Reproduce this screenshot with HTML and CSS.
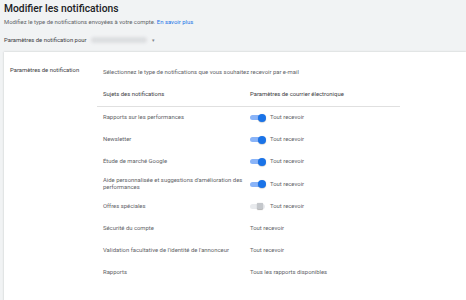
FILE: index.html
```html
<!DOCTYPE html>
<html lang="fr">
<head>
  <meta charset="UTF-8" />
  <title>Modifier les notifications</title>
  <link rel="stylesheet" href="styles.css">
</head>
<body>
  <div class="page-header">
    <h1>Modifier les notifications</h1>
    <p class="subtitle">Modifiez le type de notifications envoyées à votre compte. <a href="#">En savoir plus</a></p>
    <div class="account-select">
      Paramètres de notification pour
      <span class="account-blur"></span>
      <span class="caret">▾</span>
    </div>
  </div>

  <div class="card">
    <div class="section-label">Paramètres de notification</div>
    <div class="section-body">
      <p class="intro">Sélectionnez le type de notifications que vous souhaitez recevoir par e-mail</p>
      <div class="table">
        <div class="row head">
          <div>Sujets des notifications</div>
          <div>Paramètres de courrier électronique</div>
        </div>
        <div class="row">
          <div>Rapports sur les performances</div>
          <div class="setting"><span class="toggle on"></span>Tout recevoir</div>
        </div>
        <div class="row">
          <div>Newsletter</div>
          <div class="setting"><span class="toggle on"></span>Tout recevoir</div>
        </div>
        <div class="row">
          <div>Étude de marché Google</div>
          <div class="setting"><span class="toggle on"></span>Tout recevoir</div>
        </div>
        <div class="row">
          <div>Aide personnalisée et suggestions d'amélioration des performances</div>
          <div class="setting"><span class="toggle on"></span>Tout recevoir</div>
        </div>
        <div class="row">
          <div>Offres spéciales</div>
          <div class="setting"><span class="toggle"></span>Tout recevoir</div>
        </div>
        <div class="row">
          <div>Sécurité du compte</div>
          <div>Tout recevoir</div>
        </div>
        <div class="row">
          <div>Validation facultative de l'identité de l'annonceur</div>
          <div>Tout recevoir</div>
        </div>
        <div class="row">
          <div>Rapports</div>
          <div>Tous les rapports disponibles</div>
        </div>
      </div>
    </div>
  </div>
</body>
</html>
```

FILE: styles.css
```css
body {
  margin: 0;
  font-family: Roboto, "Liberation Sans", sans-serif;
  background: #f1f3f4;
  color: #3c4043;
  height: 300px;
  overflow: hidden;
}
.page-header {
  padding: 2px 4px 0 4px;
  height: 50px;
}
h1 {
  margin: 0;
  font-size: 10.3px;
  font-weight: 500;
  color: #202124;
  line-height: 13px;
}
.subtitle {
  margin: 3px 0 0 0;
  font-size: 5.9px;
  color: #5f6368;
  line-height: 8px;
}
.subtitle a {
  color: #1a73e8;
  text-decoration: none;
}
.account-select {
  margin-top: 10px;
  font-size: 5.9px;
  color: #3c4043;
  display: flex;
  align-items: center;
  height: 8px;
}
.account-blur {
  display: inline-block;
  width: 56px;
  height: 6px;
  margin-left: 4px;
  background: #dcdee0;
  border-radius: 3px;
  filter: blur(1.5px);
}
.caret {
  margin-left: 5px;
  color: #80868b;
  font-size: 5px;
}
.card {
  margin-left: 4px;
  background: #fff;
  box-shadow: 0 0 2px rgba(60, 64, 67, 0.25);
  display: flex;
  height: 260px;
}
.section-label {
  width: 93px;
  padding: 15px 0 0 6px;
  box-sizing: border-box;
  font-size: 5.9px;
  color: #3c4043;
}
.section-body {
  padding-top: 16px;
  width: 303px;
}
.intro {
  margin: 0 0 0 6px;
  font-size: 5.9px;
  color: #5f6368;
  line-height: 8px;
}
.table {
  margin-top: 7.5px;
  font-size: 5.9px;
  color: #5f6368;
}
.row {
  display: grid;
  grid-template-columns: 147px 1fr;
  align-items: center;
  height: 22.2px;
  padding-left: 6px;
  line-height: 7px;
}
.row > div:first-child {
  padding-right: 7px;
}
.row.head {
  height: 22px;
  border-bottom: 1px solid #e0e0e0;
  color: #3c4043;
}
.setting {
  display: flex;
  align-items: center;
}
.toggle {
  position: relative;
  display: inline-block;
  width: 15px;
  height: 5px;
  border-radius: 3px;
  background: #8ab4f8;
  margin-right: 5px;
}
.toggle::after {
  content: "";
  position: absolute;
  right: -1px;
  top: -1.5px;
  width: 8px;
  height: 8px;
  border-radius: 50%;
  background: #1a73e8;
  box-shadow: 0 0.5px 1px rgba(0, 0, 0, 0.3);
}
.toggle:not(.on) {
  background: #e8eaed;
}
.toggle:not(.on)::after {
  right: 2px;
  background: #c4c7cb;
  border-radius: 1px;
  width: 6px;
  height: 6px;
  top: -0.5px;
}
```
